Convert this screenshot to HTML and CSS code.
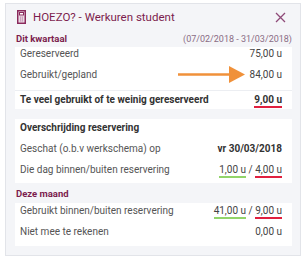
FILE: index.html
```html
<!DOCTYPE html>
<html lang="nl">
<head>
  <meta charset="UTF-8" />
  <title>HOEZO? - Werkuren student</title>
  <link rel="stylesheet" href="styles.css">
</head>
<body>
  <div class="panel">
    <div class="header">
      <svg class="calc" width="9" height="14" viewBox="0 0 9 14">
        <rect x="0.75" y="0.75" width="7.5" height="12.5" fill="#f3e6ee" stroke="#8a2a5c" stroke-width="1.5"/>
        <rect x="2.5" y="2.5" width="4" height="2.5" fill="#fff" stroke="#8a2a5c" stroke-width="1"/>
        <path d="M2.5 7h4M2.5 9h4M2.5 11h4M3.5 6.5v5M5.5 6.5v5" stroke="#c79ab5" stroke-width="0.8"/>
      </svg>
      <span class="title">HOEZO? - Werkuren student</span>
      <svg class="close" width="11" height="11" viewBox="0 0 11 11">
        <path d="M1 1l9 9M10 1l-9 9" stroke="#8e4a78" stroke-width="1.3"/>
      </svg>
    </div>

    <div class="section-head">
      <span class="section-title">Dit kwartaal</span>
      <span class="period">(07/02/2018 - 31/03/2018)</span>
    </div>
    <div class="box box-quarter">
      <div class="row first">
        <span>Gereserveerd</span><span class="val">75,00 u</span>
      </div>
      <div class="row">
        <span>Gebruikt/gepland</span><span class="val">84,00 u</span>
      </div>
      <div class="row total">
        <span>Te veel gebruikt of te weinig gereserveerd</span><span class="val"><span class="bad">9,00 u</span></span>
      </div>
      <svg class="arrow" width="68" height="18" viewBox="0 0 68 18">
        <path d="M0 9.5h54" stroke="#f0913a" stroke-width="2.6"/>
        <path d="M51 1l16 8.5l-16 8.5z" fill="#f0913a"/>
      </svg>
    </div>

    <div class="box box-overrun">
      <div class="row first strong">
        <span>Overschrijding reservering</span>
      </div>
      <div class="row">
        <span>Geschat (o.b.v werkschema) op</span><span class="val strong">vr 30/03/2018</span>
      </div>
      <div class="row">
        <span>Die dag binnen/buiten reservering</span><span class="val"><span class="good">1,00 u</span> / <span class="bad">4,00 u</span></span>
      </div>
    </div>

    <div class="section-head month">
      <span class="section-title">Deze maand</span>
    </div>
    <div class="box box-month">
      <div class="row first">
        <span>Gebruikt binnen/buiten reservering</span><span class="val"><span class="good">41,00 u</span> / <span class="bad">9,00 u</span></span>
      </div>
      <div class="row">
        <span>Niet mee te rekenen</span><span class="val">0,00 u</span>
      </div>
    </div>
  </div>
</body>
</html>
```

FILE: styles.css
```css
body {
  margin: 0;
  background: #fff;
  font-family: Roboto, "Liberation Sans", sans-serif;
}
.panel {
  box-sizing: border-box;
  margin: 3px 0 0 5px;
  width: 296px;
  height: 253px;
  padding: 0 8px 0 9px;
  background: #f4f5f8;
  border: 1px solid #e2e4e9;
}
.header {
  display: flex;
  align-items: center;
  height: 24px;
  padding: 1px 0 0 2px;
}
.calc { display: block; margin-right: 7px; }
.title {
  flex: 1;
  font-size: 11.5px;
  color: #7c1d4e;
  line-height: 14px;
}
.close { display: block; margin-right: 6px; }
.section-head {
  display: flex;
  justify-content: space-between;
  align-items: baseline;
  height: 18px;
  padding: 3px 0 0 1px;
  box-sizing: border-box;
  line-height: 14px;
}
.section-title {
  font-size: 9.5px;
  font-weight: 700;
  color: #7c1d4e;
}
.period {
  font-size: 9px;
  color: #8a6c84;
}
.box {
  position: relative;
  background: #fff;
  padding: 0 10px 0 5px;
  font-size: 10px;
  color: #555;
}
.row {
  display: flex;
  justify-content: space-between;
  line-height: 14px;
  margin-top: 7px;
}
.row.first { margin-top: 0; }
.val { color: #444; }
.strong { font-weight: 700; color: #333; }
.box-quarter { padding-bottom: 2px; }
.total {
  margin: 8px -10px 0 -5px;
  padding: 2px 10px 0 5px;
  border-top: 1px solid #eceef2;
  font-weight: 700;
  color: #333;
}
.total .val { color: #333; }
.good, .bad { padding-bottom: 1px; }
.good { border-bottom: 2px solid #92d46a; }
.bad { border-bottom: 2px solid #e0203f; }
.arrow {
  position: absolute;
  left: 163px;
  top: 18px;
}
.box-overrun {
  margin-top: 10px;
  padding-top: 2px;
  padding-bottom: 6px;
}
.month { height: 20px; padding-top: 4px; }
.box-month {
  padding-top: 1px;
  padding-bottom: 7px;
}
```
